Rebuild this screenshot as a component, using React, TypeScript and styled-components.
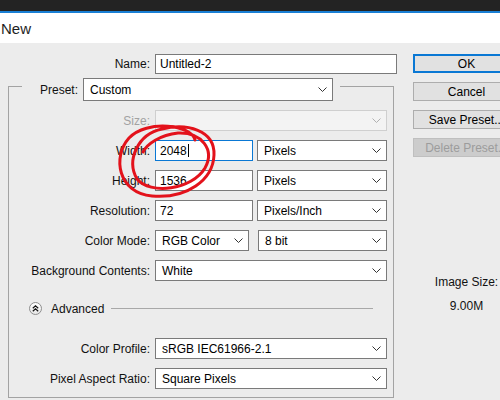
import React from "react";
import styled, { createGlobalStyle } from "styled-components";

const GlobalStyle = createGlobalStyle`
  html, body { margin: 0; padding: 0; }
  body { font-family: "Liberation Sans", Arial, sans-serif; font-size: 12px; color: #000; }
`;

const Screen = styled.div`
  position: relative;
  width: 500px;
  height: 400px;
  overflow: hidden;
  background: #ececec;
  display: flex;
  flex-direction: column;
`;

const TopStrip = styled.div`
  height: 11px;
  background: #232323;
  border-bottom: 2px solid #1a7fd4;
  flex: none;
`;

const TitleBar = styled.div`
  height: 30px;
  background: #fff;
  display: flex;
  align-items: center;
  padding-left: 1px;
  font-size: 15px;
  color: #1e1e1e;
  flex: none;
`;

const Body = styled.div`
  display: flex;
  flex: 1;
`;

const LeftPane = styled.div`
  width: 400px;
  flex: none;
  padding-top: 11px;
  display: flex;
  flex-direction: column;
`;

const NameRow = styled.div`
  display: grid;
  grid-template-columns: 150px 242px;
  column-gap: 5px;
  align-items: center;
  height: 20px;
  margin-bottom: 4px;
`;

const Label = styled.div<{ $disabled?: boolean }>`
  text-align: right;
  white-space: nowrap;
  color: ${(p) => (p.$disabled ? "#a2a2a2" : "#111")};
`;

const TextInput = styled.div<{ $focused?: boolean; $width?: number }>`
  box-sizing: border-box;
  height: 100%;
  width: ${(p) => (p.$width ? `${p.$width}px` : "100%")};
  flex: none;
  background: #fff;
  border: 1px solid ${(p) => (p.$focused ? "#0a78d4" : "#7a7a7a")};
  display: flex;
  align-items: center;
  padding-left: 4px;
  white-space: nowrap;
`;

const Caret = styled.span`
  display: inline-block;
  width: 1px;
  height: 13px;
  background: #000;
  margin-left: 1px;
`;

const Select = styled.div<{ $width?: number; $disabled?: boolean }>`
  box-sizing: border-box;
  height: 100%;
  width: ${(p) => (p.$width ? `${p.$width}px` : "auto")};
  flex: ${(p) => (p.$width ? "none" : "1")};
  background: ${(p) => (p.$disabled ? "#f3f3f3" : "#fff")};
  border: 1px solid ${(p) => (p.$disabled ? "#cfcfcf" : "#7a7a7a")};
  display: flex;
  align-items: center;
  justify-content: space-between;
  padding: 0 5px 0 6px;
  white-space: nowrap;
`;

const Chevron = ({ color = "#333" }: { color?: string }) => (
  <svg width="9" height="5" viewBox="0 0 9 5" style={{ flex: "none" }}>
    <path d="M0.5 0.5 L4.5 4.5 L8.5 0.5" stroke={color} strokeWidth="1" fill="none" />
  </svg>
);

const Group = styled.div`
  margin-left: 8px;
  width: 386px;
  display: flex;
  flex-direction: column;
`;

const GroupHeader = styled.div`
  display: flex;
  height: 23px;
`;

const CornerLeft = styled.div`
  width: 14px;
  margin-top: 8px;
  border-top: 1px solid #a3a3a3;
  border-left: 1px solid #a3a3a3;
  box-sizing: border-box;
  flex: none;
`;

const CornerRight = styled.div`
  flex: 1;
  margin-top: 8px;
  margin-left: 7px;
  border-top: 1px solid #a3a3a3;
  border-right: 1px solid #a3a3a3;
  box-sizing: border-box;
`;

const PresetLabel = styled(Label)`
  width: 56px;
  align-self: center;
  margin-right: 5px;
  flex: none;
`;

const GroupBox = styled.div`
  border: 1px solid #a3a3a3;
  border-top: none;
  display: flex;
  flex-direction: column;
  gap: 9px;
  padding: 9px 5px 8px 0;
`;

const Row = styled.div`
  display: grid;
  grid-template-columns: 141px 232px;
  column-gap: 5px;
  align-items: center;
  height: 21px;
`;

const Pair = styled.div<{ $gap: number }>`
  display: flex;
  gap: ${(p) => p.$gap}px;
  height: 100%;
`;

const AdvancedRow = styled.div`
  display: flex;
  align-items: center;
  height: 21px;
  margin: 8px 0 10px 20px;
`;

const RoundButton = styled.div`
  width: 13px;
  height: 13px;
  box-sizing: border-box;
  border-radius: 50%;
  border: 1px solid #8e8e8e;
  background: linear-gradient(#ffffff, #e6e6e6);
  display: flex;
  align-items: center;
  justify-content: center;
  margin-right: 9px;
  flex: none;
`;

const AdvancedText = styled.span`
  color: #111;
`;

const Rule = styled.div`
  flex: 1;
  height: 1px;
  background: #a8a8a8;
  margin: 0 15px 0 7px;
`;

const RightPane = styled.div`
  padding: 11px 0 0 13px;
  display: flex;
  flex-direction: column;
  gap: 9px;
`;

const Button = styled.div<{ $primary?: boolean; $disabled?: boolean }>`
  box-sizing: border-box;
  width: 107px;
  height: 19px;
  display: flex;
  align-items: center;
  justify-content: center;
  white-space: nowrap;
  background: ${(p) => (p.$disabled ? "#cccccc" : "#e1e1e1")};
  border: ${(p) => (p.$primary ? "2px solid #0a78d4" : p.$disabled ? "1px solid #bfbfbf" : "1px solid #adadad")};
  color: ${(p) => (p.$disabled ? "#9c9c9c" : "#000")};
`;

const InfoBlock = styled.div`
  width: 107px;
  margin-top: 109px;
  display: flex;
  flex-direction: column;
  align-items: center;
  gap: 9px;
  line-height: 15px;
  color: #111;
`;

const Annotation = styled.svg`
  position: absolute;
  left: 0;
  top: 0;
  pointer-events: none;
`;

export default function App() {
  return (
    <>
      <GlobalStyle />
      <Screen>
        <TopStrip />
        <TitleBar>New</TitleBar>
        <Body>
          <LeftPane>
            <NameRow>
              <Label>Name:</Label>
              <TextInput>Untitled-2</TextInput>
            </NameRow>
            <Group>
              <GroupHeader>
                <CornerLeft />
                <PresetLabel>Preset:</PresetLabel>
                <Select $width={250}>
                  <span>Custom</span>
                  <Chevron />
                </Select>
                <CornerRight />
              </GroupHeader>
              <GroupBox>
                <Row>
                  <Label $disabled>Size:</Label>
                  <Select $disabled>
                    <span />
                    <Chevron color="#b0b0b0" />
                  </Select>
                </Row>
                <Row>
                  <Label>Width:</Label>
                  <Pair $gap={4}>
                    <TextInput $focused $width={98}>
                      2048
                      <Caret />
                    </TextInput>
                    <Select>
                      <span>Pixels</span>
                      <Chevron />
                    </Select>
                  </Pair>
                </Row>
                <Row>
                  <Label>Height:</Label>
                  <Pair $gap={4}>
                    <TextInput $width={98}>1536</TextInput>
                    <Select>
                      <span>Pixels</span>
                      <Chevron />
                    </Select>
                  </Pair>
                </Row>
                <Row>
                  <Label>Resolution:</Label>
                  <Pair $gap={4}>
                    <TextInput $width={98}>72</TextInput>
                    <Select>
                      <span>Pixels/Inch</span>
                      <Chevron />
                    </Select>
                  </Pair>
                </Row>
                <Row>
                  <Label>Color Mode:</Label>
                  <Pair $gap={9}>
                    <Select $width={94}>
                      <span>RGB Color</span>
                      <Chevron />
                    </Select>
                    <Select>
                      <span>8 bit</span>
                      <Chevron />
                    </Select>
                  </Pair>
                </Row>
                <Row>
                  <Label>Background Contents:</Label>
                  <Select>
                    <span>White</span>
                    <Chevron />
                  </Select>
                </Row>
                <AdvancedRow>
                  <RoundButton>
                    <svg width="7" height="7" viewBox="0 0 7 7">
                      <path d="M0.8 3.2 L3.5 0.8 L6.2 3.2 M0.8 6.2 L3.5 3.8 L6.2 6.2" stroke="#111" strokeWidth="1.2" fill="none" />
                    </svg>
                  </RoundButton>
                  <AdvancedText>Advanced</AdvancedText>
                  <Rule />
                </AdvancedRow>
                <Row>
                  <Label>Color Profile:</Label>
                  <Select>
                    <span>sRGB IEC61966-2.1</span>
                    <Chevron />
                  </Select>
                </Row>
                <Row>
                  <Label>Pixel Aspect Ratio:</Label>
                  <Select>
                    <span>Square Pixels</span>
                    <Chevron />
                  </Select>
                </Row>
              </GroupBox>
            </Group>
          </LeftPane>
          <RightPane>
            <Button $primary>OK</Button>
            <Button>Cancel</Button>
            <Button>Save Preset...</Button>
            <Button $disabled>Delete Preset...</Button>
            <InfoBlock>
              <span>Image Size:</span>
              <span>9.00M</span>
            </InfoBlock>
          </RightPane>
        </Body>
        <Annotation width="500" height="400" viewBox="0 0 500 400">
          <path
            d="M195 140 C192 125 147 119 129 138 C112 157 118 193 152 196 C187 199 213 180 214 155 C215 130 187 123 162 129 C138 134 126 160 137 179 C150 195 192 190 205 168 C215 150 202 132 178 133 C160 135 147 144 143 152"
            stroke="#e3121b"
            strokeWidth="3"
            fill="none"
            strokeLinecap="round"
            strokeLinejoin="round"
          />
        </Annotation>
      </Screen>
    </>
  );
}
